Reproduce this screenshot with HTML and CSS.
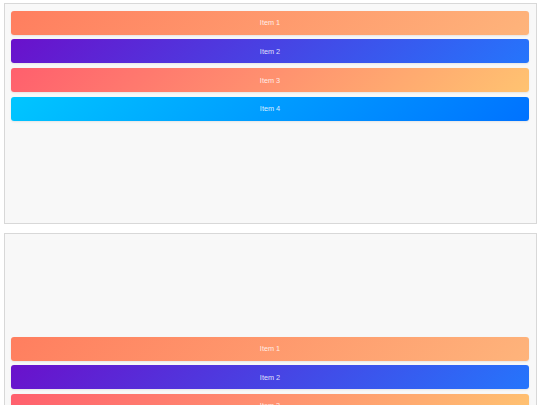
FILE: index.html
```html
<!DOCTYPE html>
<html lang="en">
<head>
    <meta charset="UTF-8">
    <meta name="viewport" content="width=device-width, initial-scale=1.0">
    <title>Gradient List</title>
    <link rel="stylesheet" href="styles.css">
</head>
<body>
    <div class="list">
        <div class="item item-1">Item 1</div>
        <div class="item item-2">Item 2</div>
        <div class="item item-3">Item 3</div>
        <div class="item item-4">Item 4</div>
    </div>
    <div class="list list-end">
        <div class="item item-1">Item 1</div>
        <div class="item item-2">Item 2</div>
        <div class="item item-3">Item 3</div>
        <div class="item item-4">Item 4</div>
    </div>
</body>
</html>
```

FILE: styles.css
```css
body {
    margin: 0;
    padding: 3.3px 3.5px;
    background: #fff;
    font-family: "Liberation Sans", Arial, sans-serif;
}
.list {
    height: 221px;
    box-sizing: border-box;
    border: 1px solid #d8d8d8;
    background: #f8f8f8;
    padding: 6.5px 6.5px;
    display: flex;
    flex-direction: column;
    gap: 4.67px;
    margin-bottom: 8.8px;
}
.list-end {
    justify-content: flex-end;
}
.item {
    flex: 0 0 24px;
    border-radius: 3px;
    color: rgba(255, 255, 255, 0.85);
    font-size: 7.3px;
    display: flex;
    align-items: center;
    justify-content: center;
    box-shadow: 0 1px 2px rgba(0, 0, 0, 0.08);
}
.item-1 {
    background: linear-gradient(135deg, #ff7e5f, #feb47b);
}
.item-2 {
    background: linear-gradient(135deg, #6a11cb, #2575fc);
}
.item-3 {
    background: linear-gradient(135deg, #ff5f6d, #ffc371);
}
.item-4 {
    background: linear-gradient(135deg, #00c6ff, #0072ff);
}
```
